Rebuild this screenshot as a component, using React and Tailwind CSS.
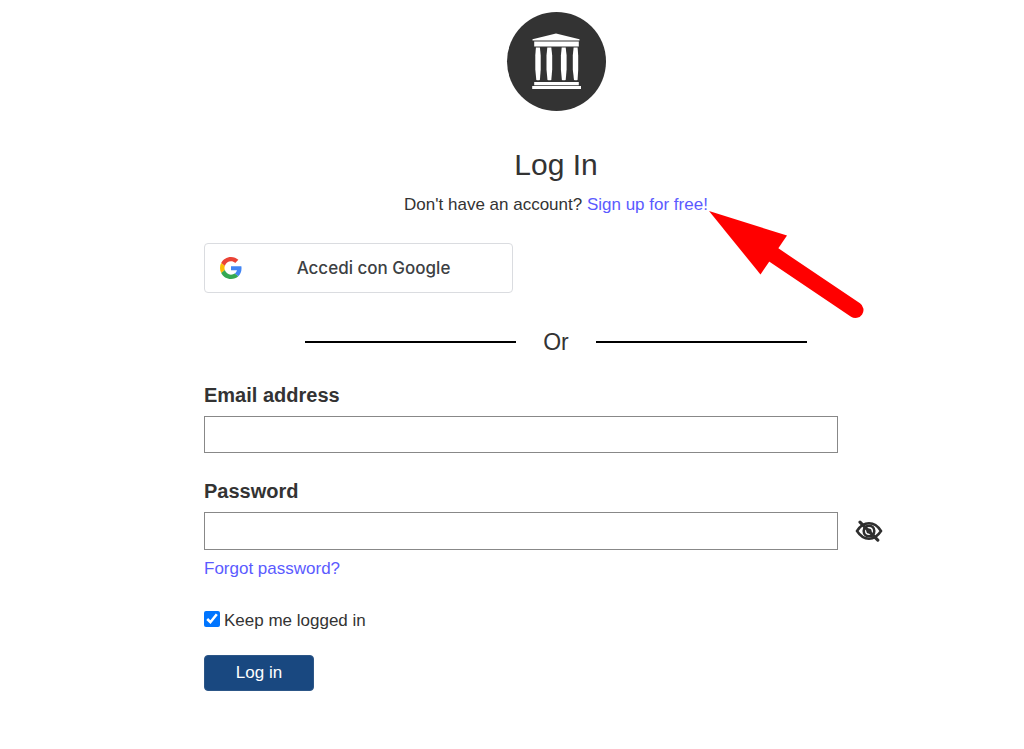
function TempleLogo() {
  return (
    <svg viewBox="0 0 100 100" className="size-[100px]" role="img" aria-label="Logo">
      <circle cx="50.5" cy="49.5" r="49.5" fill="#333" />
      <g fill="#fff">
        <path d="M26.5 27.3 50 21.6l23.5 5.7v1.2h-47z" />
        <path d="M28.2 29.6h44.6v5H28.2z" />
        <path d="M29.9 35.4h4l.8 8v14l-.8 10.5q-1.8.9-3.6 0l-1-10.5v-14z" />
        <path d="M41.3 35.4h4l.9 8v14l-.9 10.5q-1.9.9-3.8 0l-1-10.5v-14z" />
        <path d="M55.7 35.4h4l.9 8v14l-.9 10.5q-1.9.9-3.8 0l-1-10.5v-14z" />
        <path d="M67.6 35.4h4l.6 8v14l-.6 10.5q-1.8.9-3.6 0l-1.2-10.5v-14z" />
        <path d="M28.2 70h44.6v3.3H28.2z" />
        <path d="M26.2 74.100h48.800v2.900H26.200z" />
      </g>
    </svg>
  );
}

function GoogleLogo() {
  return (
    <svg viewBox="0 0 48 48" className="size-[22px] shrink-0" aria-hidden="true">
      <path fill="#EA4335" d="M24 9.5c3.54 0 6.71 1.22 9.21 3.6l6.85-6.85C35.9 2.38 30.47 0 24 0 14.62 0 6.51 5.38 2.56 13.22l7.98 6.19C12.43 13.72 17.74 9.5 24 9.5z" />
      <path fill="#4285F4" d="M46.98 24.55c0-1.57-.15-3.09-.38-4.55H24v9.02h12.94c-.58 2.96-2.26 5.48-4.78 7.18l7.73 6c4.51-4.18 7.09-10.36 7.09-17.65z" />
      <path fill="#FBBC05" d="M10.53 28.59c-.48-1.45-.76-2.99-.76-4.59s.27-3.14.76-4.59l-7.98-6.19C.92 16.46 0 20.12 0 24c0 3.88.92 7.54 2.56 10.78l7.97-6.19z" />
      <path fill="#34A853" d="M24 48c6.48 0 11.93-2.13 15.89-5.81l-7.73-6c-2.15 1.45-4.92 2.3-8.16 2.3-6.26 0-11.57-4.22-13.47-9.91l-7.98 6.19C6.51 42.62 14.62 48 24 48z" />
    </svg>
  );
}

function HiddenEye() {
  return (
    <svg viewBox="0 0 28 22" className="h-[22px] w-7" fill="none" stroke="#2f2f2f" aria-hidden="true">
      <path d="M2 11C8.5.8 19.5.8 26 11 19.5 21.2 8.5 21.2 2 11z" strokeWidth="2.5" />
      <circle cx="14" cy="11" r="5.3" strokeWidth="2.6" />
      <circle cx="14" cy="11" r="2.6" fill="#2f2f2f" stroke="none" />
      <path d="M5 2.2 22.800 20.200" strokeWidth="3.100" strokeLinecap="round" />
    </svg>
  );
}

function PointerArrow() {
  return (
    <svg viewBox="0 0 156 110" className="pointer-events-none absolute top-[18px] left-full h-[110px] w-[156px]" aria-hidden="true">
      <path d="M1 0 79 24.500 52.500 63.500z" fill="#f00" />
      <path d="M63 42 147.500 99" stroke="#f00" strokeWidth="16" strokeLinecap="round" />
    </svg>
  );
}

export default function App() {
  return (
    <main className="min-h-screen bg-white pt-3 pr-[116px] pb-14 pl-[204px] font-['Liberation_Sans',Arial,sans-serif] text-[17px] leading-6 text-[#333]">
      <header className="flex flex-col items-center">
        <TempleLogo />
        <h1 className="mt-[33px] text-[30px] leading-10">Log In</h1>
        <p className="mt-2">
          Don't have an account?{" "}
          <span className="relative inline-block">
            <a href="#signup" className="text-[#5b5bff]">Sign up for free!</a>
            <PointerArrow />
          </span>
        </p>
      </header>

      <button type="button" className="mt-[26px] flex h-[50px] w-[309px] items-center rounded border border-[#dadce0] px-[15px] font-['Inter',sans-serif] font-medium text-[#3c4043]">
        <GoogleLogo />
        <span className="flex-1 pl-2 text-center">Accedi con Google</span>
      </button>

      <div className="mt-8 flex items-center justify-center text-[23px] leading-[34px]">
        <span className="h-0.5 w-[30%] bg-black" />
        <span className="w-20 text-center">Or</span>
        <span className="h-0.5 w-[30%] bg-black" />
      </div>

      <form onSubmit={(e) => e.preventDefault()}>
        <label htmlFor="email" className="mt-6 block text-xl leading-6 font-bold">Email address</label>
        <input id="email" type="email" className="mt-[9px] block h-[37px] w-[90%] border border-[#888] px-2" />

        <label htmlFor="password" className="mt-[26px] block text-xl leading-6 font-bold">Password</label>
        <div className="mt-[9px] flex items-center">
          <input id="password" type="password" className="block h-[38px] w-[90%] border border-[#888] px-2" />
          <button type="button" aria-label="Show password" className="ml-[17px]">
            <HiddenEye />
          </button>
        </div>
        <a href="#forgot" className="mt-[7px] block w-fit text-[#5b5bff]">Forgot password?</a>

        <label className="mt-7 flex w-fit items-start gap-1">
          <input type="checkbox" defaultChecked className="mt-0.5 size-4 accent-[#0075ff]" />
          Keep me logged in
        </label>
        <button type="submit" className="mt-[22px] h-9 w-[110px] rounded border border-[#2c5687] bg-[#194880] text-white">Log in</button>
      </form>
    </main>
  );
}
